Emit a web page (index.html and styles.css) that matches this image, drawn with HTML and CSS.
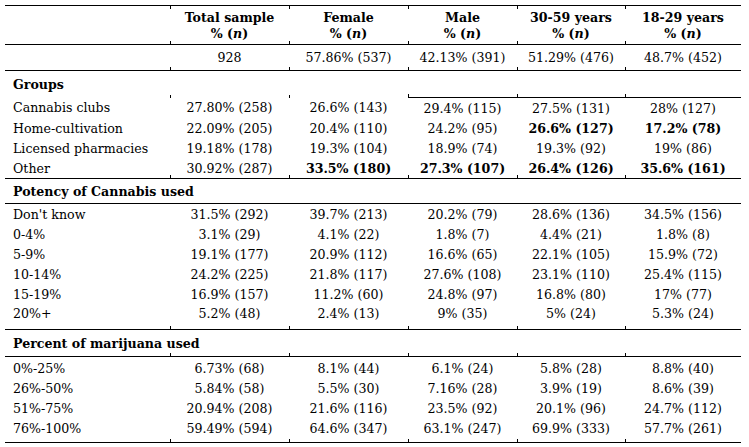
FILE: index.html
```html
<!DOCTYPE html>
<html>
<head>
<meta charset="utf-8">
<link rel="stylesheet" href="styles.css">
</head>
<body>
<table class="tbl">
  <colgroup>
    <col class="c-label"><col class="c-total"><col class="c-female"><col class="c-male"><col class="c-mid"><col class="c-young">
  </colgroup>
  <thead>
    <tr class="r-head tk">
      <th></th>
      <th>Total sample<br>% (<i>n</i>)</th>
      <th>Female<br>% (<i>n</i>)</th>
      <th>Male<br>% (<i>n</i>)</th>
      <th>30-59 years<br>% (<i>n</i>)</th>
      <th>18-29 years<br>% (<i>n</i>)</th>
    </tr>
  </thead>
  <tbody>
    <tr class="r-n tk">
      <td></td><td>928</td><td>57.86% (537)</td><td>42.13% (391)</td><td>51.29% (476)</td><td>48.7% (452)</td>
    </tr>
    <tr class="r-sec r-groups tk">
      <td class="sec">Groups</td><td></td><td></td><td class="ul"></td><td class="ul"></td><td class="ul"></td>
    </tr>
    <tr class="r-d first"><td>Cannabis clubs</td><td>27.80% (258)</td><td>26.6% (143)</td><td>29.4% (115)</td><td>27.5% (131)</td><td>28% (127)</td></tr>
    <tr class="r-d"><td>Home-cultivation</td><td>22.09% (205)</td><td>20.4% (110)</td><td>24.2% (95)</td><td class="b">26.6% (127)</td><td class="b">17.2% (78)</td></tr>
    <tr class="r-d"><td>Licensed pharmacies</td><td>19.18% (178)</td><td>19.3% (104)</td><td>18.9% (74)</td><td>19.3% (92)</td><td>19% (86)</td></tr>
    <tr class="r-d last tk"><td>Other</td><td>30.92% (287)</td><td class="b">33.5% (180)</td><td class="b">27.3% (107)</td><td class="b">26.4% (126)</td><td class="b">35.6% (161)</td></tr>
    <tr class="r-sec line"><td class="sec" colspan="6">Potency of Cannabis used</td></tr>
    <tr class="r-p"><td>Don't know</td><td>31.5% (292)</td><td>39.7% (213)</td><td>20.2% (79)</td><td>28.6% (136)</td><td>34.5% (156)</td></tr>
    <tr class="r-p"><td>0-4%</td><td>3.1% (29)</td><td>4.1% (22)</td><td>1.8% (7)</td><td>4.4% (21)</td><td>1.8% (8)</td></tr>
    <tr class="r-p"><td>5-9%</td><td>19.1% (177)</td><td>20.9% (112)</td><td>16.6% (65)</td><td>22.1% (105)</td><td>15.9% (72)</td></tr>
    <tr class="r-p"><td>10-14%</td><td>24.2% (225)</td><td>21.8% (117)</td><td>27.6% (108)</td><td>23.1% (110)</td><td>25.4% (115)</td></tr>
    <tr class="r-p"><td>15-19%</td><td>16.9% (157)</td><td>11.2% (60)</td><td>24.8% (97)</td><td>16.8% (80)</td><td>17% (77)</td></tr>
    <tr class="r-p last-p tk"><td>20%+</td><td>5.2% (48)</td><td>2.4% (13)</td><td>9% (35)</td><td>5% (24)</td><td>5.3% (24)</td></tr>
    <tr class="r-sec line mar tk"><td class="sec">Percent of marijuana used</td><td></td><td></td><td></td><td></td><td></td></tr>
    <tr class="r-m"><td>0%-25%</td><td>6.73% (68)</td><td>8.1% (44)</td><td>6.1% (24)</td><td>5.8% (28)</td><td>8.8% (40)</td></tr>
    <tr class="r-m"><td>26%-50%</td><td>5.84% (58)</td><td>5.5% (30)</td><td>7.16% (28)</td><td>3.9% (19)</td><td>8.6% (39)</td></tr>
    <tr class="r-m"><td>51%-75%</td><td>20.94% (208)</td><td>21.6% (116)</td><td>23.5% (92)</td><td>20.1% (96)</td><td>24.7% (112)</td></tr>
    <tr class="r-m end tk"><td>76%-100%</td><td>59.49% (594)</td><td>64.6% (347)</td><td>63.1% (247)</td><td>69.9% (333)</td><td>57.7% (261)</td></tr>
  </tbody>
</table>
</body>
</html>
```

FILE: styles.css
```css
html, body {
  margin: 0;
  padding: 0;
  background: #ffffff;
}

body {
  padding: 5px 0 0 5px;
  font-family: "DejaVu Serif", "Liberation Serif", serif;
  font-size: 12.6px;
  color: #000000;
}

.tbl {
  border-collapse: collapse;
  table-layout: fixed;
  width: 736px;
}

.c-label { width: 165px; }
.c-total { width: 119px; }
.c-female { width: 119px; }
.c-male { width: 109px; }
.c-mid { width: 108px; }
.c-young { width: 116px; }

.tbl th,
.tbl td {
  padding: 0;
  text-align: center;
  vertical-align: middle;
  white-space: nowrap;
  line-height: 15px;
}

.tbl td:first-child {
  text-align: left;
  padding-left: 8px;
}

/* small column-boundary ticks next to the rules */
.tk td + td,
.tk th + th {
  background: linear-gradient(#000, #000) left bottom / 1px 3px no-repeat;
}

.r-head.tk th + th {
  background:
    linear-gradient(#000, #000) left top / 1px 3px no-repeat,
    linear-gradient(#000, #000) left bottom / 1px 3px no-repeat;
}

.r-head th {
  font-weight: bold;
  line-height: 16px;
  height: 37px;
  border-top: 1px solid #000;
  border-bottom: 1px solid #000;
  padding-top: 1px;
}

.r-n td {
  height: 25px;
  border-bottom: 1px solid #000;
}

.r-groups td {
  height: 26px;
}

.r-groups td.ul {
  border-bottom: 1px solid #000;
}

.sec {
  font-weight: bold;
}

.r-d td {
  height: 20px;
}

.r-d.last td {
  border-bottom: 1px solid #000;
}

.r-sec.line td {
  height: 24px;
  border-bottom: 1px solid #000;
}

.r-sec.mar td {
  height: 26px;
}

.r-p td {
  height: 20px;
}

.r-p.last-p td {
  height: 19px;
  padding-bottom: 6px;
  border-bottom: 1px solid #000;
}

.r-m td {
  height: 16px;
  vertical-align: top;
  padding-top: 4px;
}

.r-m.end td {
  height: 21px;
  border-bottom: 1px solid #000;
}

.b {
  font-weight: bold;
}
```
